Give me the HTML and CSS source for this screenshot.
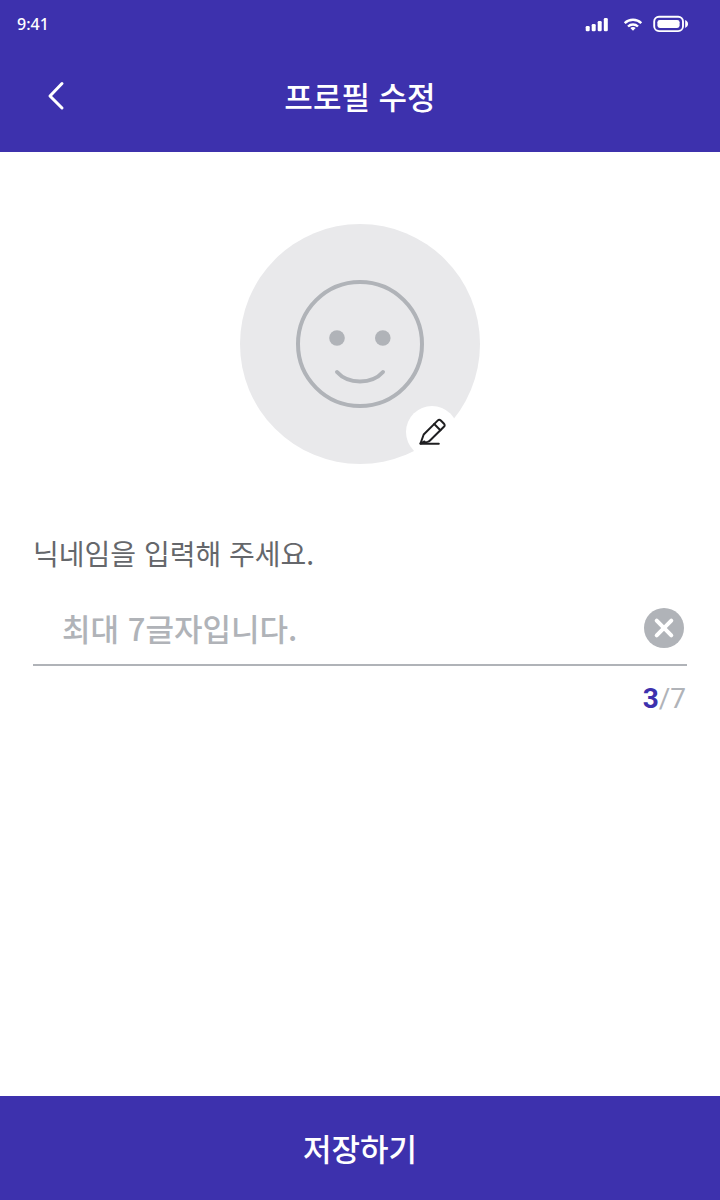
FILE: index.html
```html
<!DOCTYPE html>
<html lang="ko">
<head>
<meta charset="utf-8">
<meta name="viewport" content="width=device-width, initial-scale=1">
<title>프로필 수정</title>
<link rel="stylesheet" href="styles.css">
</head>
<body>
<div class="screen">
  <header class="header">
    <div class="status">
      <span class="time">9:41</span>
      <svg class="status-icons" width="104" height="18" viewBox="0 0 104 18" fill="#fff" aria-hidden="true">
        <rect x="0.700" y="11" width="4" height="5.300" rx="1.300"/>
        <rect x="6.700" y="9" width="4" height="7.300" rx="1.300"/>
        <rect x="12.700" y="6" width="4" height="10.300" rx="1.300"/>
        <rect x="18.800" y="3" width="4" height="13.300" rx="1.300"/>
        <g fill="none" stroke="#fff" stroke-width="2.400">
          <path d="M39.700 8.100a12 12 0 0 1 16.600 0"/>
          <path d="M43 11.500a7.200 7.200 0 0 1 10 0"/>
        </g>
        <path d="M45.300 13.100a4.200 4.200 0 0 1 5.400 0L48 15.800z"/>
        <rect x="69.200" y="1.700" width="28.800" height="14.400" rx="4.800" fill="none" stroke="#fff" stroke-width="1.900"/>
        <rect x="72.400" y="4.900" width="22.200" height="8" rx="2.400"/>
        <path d="M100.200 5.100c3.800 1.600 3.800 6.200 0 7.800z"/>
      </svg>
    </div>
    <div class="nav">
      <button class="back" type="button" aria-label="뒤로">
        <svg width="20" height="32" viewBox="0 0 20 32" fill="none" stroke="#fff" stroke-width="3" stroke-linecap="round" stroke-linejoin="round"><path d="M16 3.500 4 16 16 28"/></svg>
      </button>
      <h1 class="title">프로필 수정</h1>
    </div>
  </header>
  <main class="content">
    <div class="avatar">
      <svg width="128" height="128" viewBox="0 0 128 128" fill="none" stroke="#b0b3b8" stroke-width="4" stroke-linecap="round" aria-hidden="true">
        <circle cx="64" cy="64" r="62"/>
        <circle cx="41" cy="58" r="7.800" fill="#b0b3b8" stroke="none"/>
        <circle cx="86.800" cy="58" r="7.800" fill="#b0b3b8" stroke="none"/>
        <path d="M41 92c11 12.500 35 12.500 46 0"/>
      </svg>
      <button class="edit" type="button" aria-label="사진 수정">
        <svg width="32" height="32" viewBox="0 0 32 32" fill="none" stroke="#1f1f21" stroke-width="2" stroke-linecap="round" stroke-linejoin="round">
          <path d="M4.500 27.500 7.700 18.500 21.600 4.600q1.600-1.600 3.200-.1l3 3q1.700 1.700.1 3.300L14 24.500q-1 1-2.500 1.400z"/>
          <path d="M18.200 8 24.400 14.200M4.500 27.800h18.300M4.500 27.500l4-2"/>
        </svg>
      </button>
    </div>
    <form class="form" id="profile">
      <label class="label" for="nickname">닉네임을 입력해 주세요.</label>
      <div class="field">
        <input class="input" id="nickname" type="text" maxlength="7" placeholder="최대 7글자입니다.">
        <button class="clear" type="reset" aria-label="지우기">
          <svg width="40" height="40" viewBox="0 0 40 40"><circle cx="20" cy="20" r="20" fill="#b0b3b8"/><path d="m12.700 12.700 14.600 14.600m0-14.600L12.700 27.300" stroke="#fff" stroke-width="4" stroke-linecap="round"/></svg>
        </button>
      </div>
      <p class="count"><strong class="current">3</strong>/7</p>
    </form>
  </main>
  <button class="save" type="submit" form="profile">저장하기</button>
</div>
</body>
</html>
```
FILE: styles.css
```css
* { box-sizing: border-box; }
body {
  margin: 0;
  background: #fff;
  font-family: "Noto Sans CJK KR", sans-serif;
}
button { padding: 0; border: 0; background: none; cursor: pointer; }
svg { display: block; }
.screen { display: flex; flex-direction: column; min-height: 100vh; }
.header { background: #3d31ad; color: #fff; }
.status {
  display: flex;
  align-items: center;
  justify-content: space-between;
  height: 48px;
  padding: 0 31px 0 17px;
}
.time { font: 500 16px/24px "Noto Sans", sans-serif; }
.nav {
  display: grid;
  grid-template-columns: 66px 1fr 66px;
  align-items: center;
  height: 104px;
  padding-bottom: 8px;
}
.back { display: flex; justify-content: flex-end; }
.title {
  margin: 0;
  font-size: 31px;
  font-weight: 500;
  line-height: 48px;
  text-align: center;
}
.content { flex: 1; padding: 72px 33px 32px; }
.avatar {
  position: relative;
  display: grid;
  place-items: center;
  width: 240px;
  height: 240px;
  margin: 0 auto;
  border-radius: 50%;
  background: #e9e9eb;
}
.edit {
  position: absolute;
  right: 22px;
  bottom: 6px;
  display: grid;
  place-items: center;
  width: 52px;
  height: 52px;
  border-radius: 50%;
  background: #fff;
}
.form { margin-top: 69px; }
.label { display: block; color: #65676b; font-size: 28px; line-height: 40px; }
.field {
  display: flex;
  align-items: center;
  height: 74px;
  margin-top: 19px;
  padding: 0 3px 0 29px;
  border-bottom: 2px solid #b0b3b8;
}
.input {
  flex: 1;
  min-width: 0;
  height: 48px;
  padding: 0;
  border: 0;
  outline: 0;
  background: none;
  color: #65676b;
  font: 500 31px/48px "Noto Sans CJK KR", sans-serif;
}
.input::placeholder { color: #b0b3b8; opacity: 1; }
.count {
  margin: 15px 1px 0 0;
  color: #b0b3b8;
  font: 400 28px/36px Roboto, sans-serif;
  text-align: right;
}
.current { color: #3d31ad; font-weight: 700; }
.save {
  height: 104px;
  background: #3d31ad;
  color: #fff;
  font: 500 31px/48px "Noto Sans CJK KR", sans-serif;
}
```
